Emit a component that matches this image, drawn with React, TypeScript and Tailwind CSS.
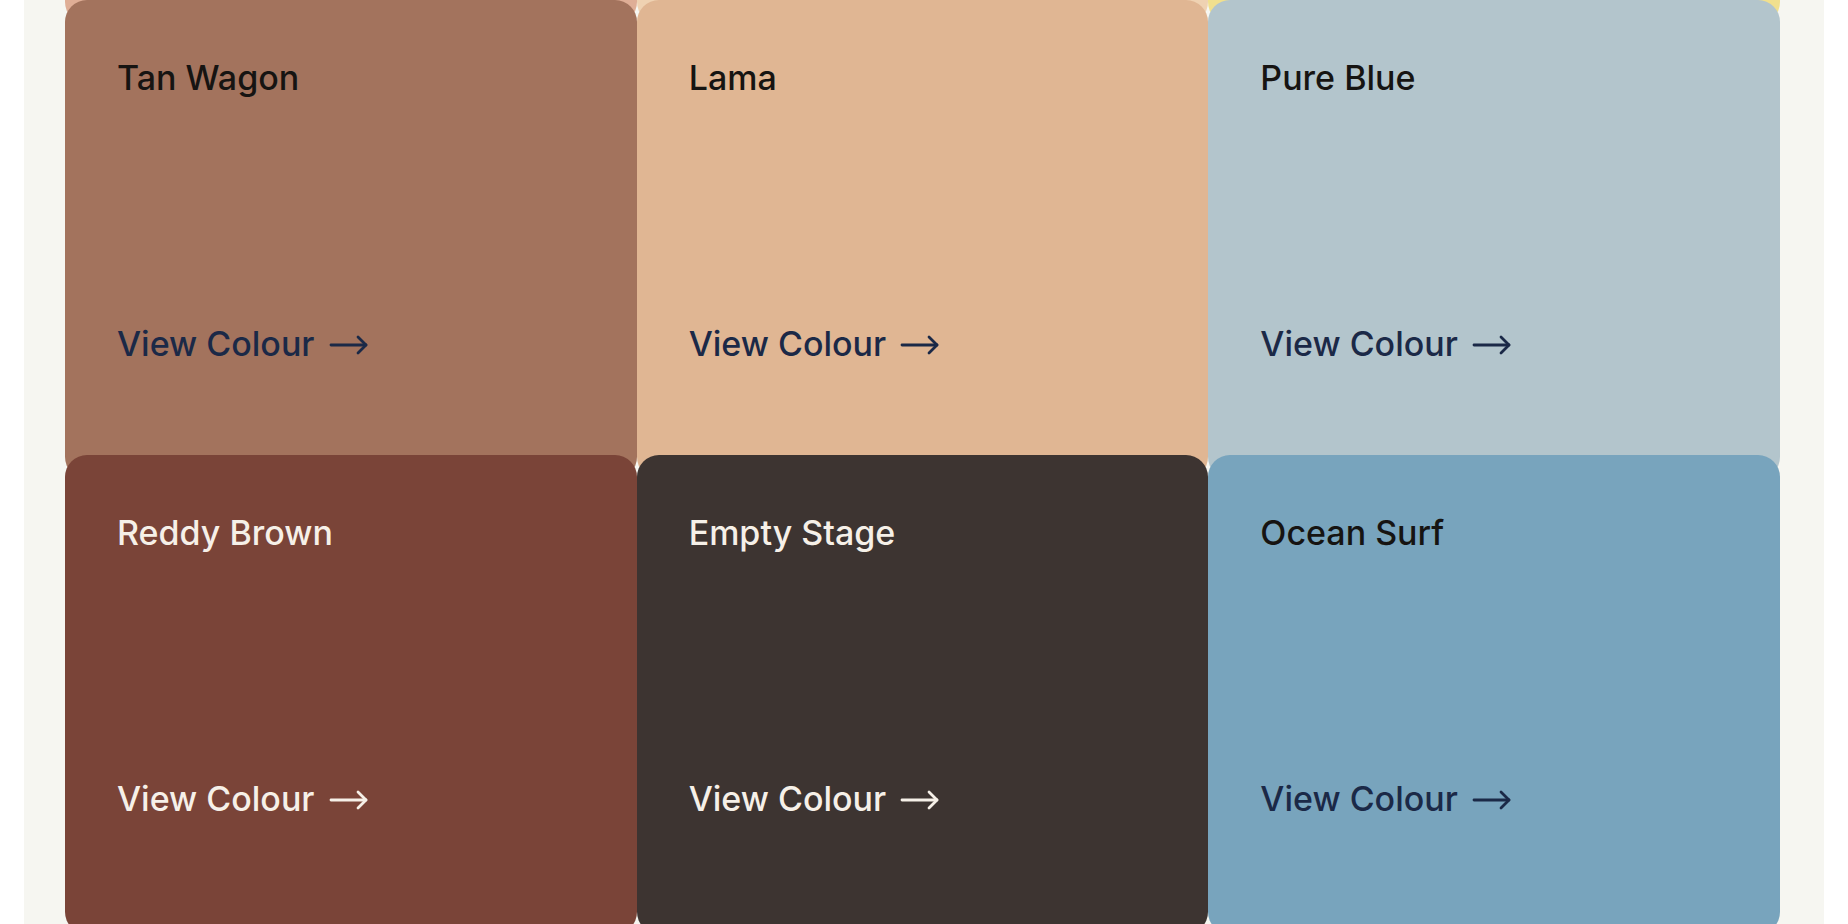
import React from "react";

type Card = {
  name?: string;
  bg: string;
  title: string;
  link: string;
};

const rows: Card[][] = [
  [
    { bg: "bg-[#dfae96]", title: "", link: "" },
    { bg: "bg-[#efd2b2]", title: "", link: "" },
    { bg: "bg-[#f1e08e]", title: "", link: "" },
  ],
  [
    { name: "Tan Wagon", bg: "bg-[#a3735d]", title: "text-[#161412]", link: "text-[#1b2947]" },
    { name: "Lama", bg: "bg-[#e0b693]", title: "text-[#161412]", link: "text-[#1b2947]" },
    { name: "Pure Blue", bg: "bg-[#b3c5cc]", title: "text-[#161412]", link: "text-[#1b2947]" },
  ],
  [
    { name: "Reddy Brown", bg: "bg-[#7a4438]", title: "text-[#f6f0e8]", link: "text-[#f6f0e8]" },
    { name: "Empty Stage", bg: "bg-[#3d3431]", title: "text-[#f6f0e8]", link: "text-[#f6f0e8]" },
    { name: "Ocean Surf", bg: "bg-[#78a4bd]", title: "text-[#161412]", link: "text-[#1b2947]" },
  ],
];

function LongArrow() {
  return (
    <svg
      width="40"
      height="24"
      viewBox="0 0 40 24"
      fill="none"
      stroke="currentColor"
      strokeWidth="2.8"
      strokeLinecap="round"
      strokeLinejoin="round"
      className="ml-[14px] mt-[3px]"
    >
      <path d="M2 12 H37" />
      <path d="M29 4 L37 12 L29 20" />
    </svg>
  );
}

function ColourCard({ card }: { card: Card }) {
  return (
    <div
      className={`${card.bg} rounded-[22px] h-[479px] -mb-[24px] flex flex-col pt-[57px] px-[52px]`}
    >
      {card.name ? (
        <>
          <div className={`${card.title} text-[34px] leading-[41px] font-medium`}>{card.name}</div>
          <a
            className={`${card.link} mt-[225px] flex items-center text-[34px] leading-[41px] font-medium`}
          >
            <span>View Colour</span>
            <LongArrow />
          </a>
        </>
      ) : null}
    </div>
  );
}

export default function App() {
  return (
    <div className="w-full h-[924px] overflow-hidden bg-white px-[24px] [font-family:Inter,'Noto_Sans',sans-serif]">
      <div className="h-full flex flex-col bg-[#f6f6f1] pl-[41px] pr-[44px]">
        <div className="grid grid-cols-3 -mt-[455px]">
          {rows.flat().map((c, i) => (
            <ColourCard key={i} card={c} />
          ))}
        </div>
      </div>
    </div>
  );
}
